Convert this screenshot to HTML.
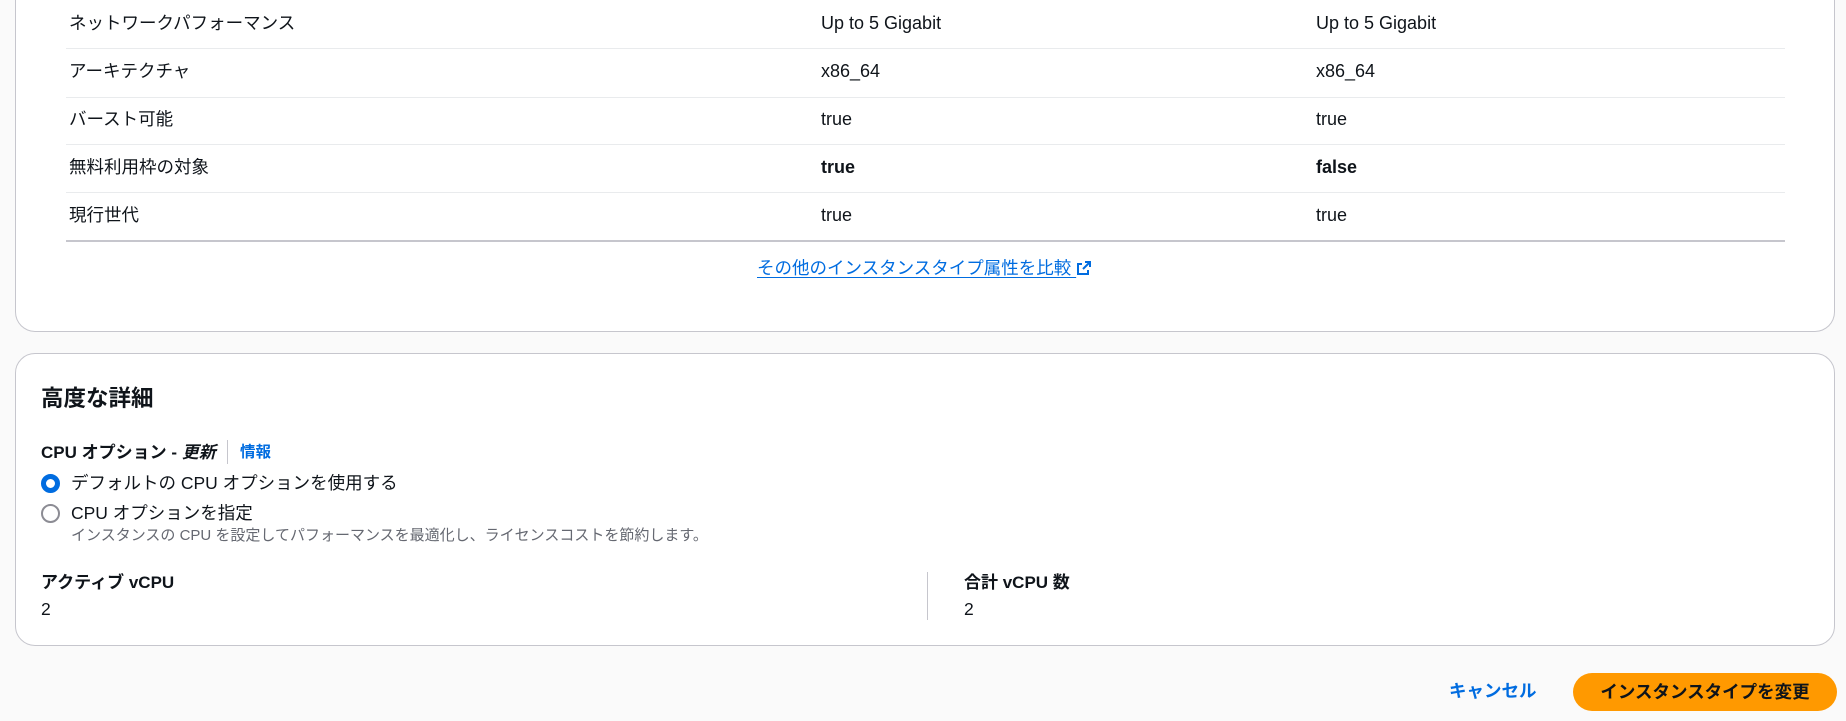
<!DOCTYPE html>
<html><head><meta charset="utf-8"><style>
*{box-sizing:border-box;margin:0;padding:0}
body{width:1846px;height:721px;overflow:hidden;background:#fafafa;font-family:"Liberation Sans","Noto Sans CJK JP",sans-serif;color:#0f141a;font-size:17.5px;position:relative}
.card{position:absolute;left:15px;right:11px;background:#fff;border:1px solid #c6c6cd;border-radius:20px}
.a{position:absolute;white-space:nowrap;line-height:24px}
.v{font-size:18px}
.line{position:absolute;left:66px;width:1719px;height:1px;background:#e9ebed}
.blue{color:#006ce0}
</style></head><body>
<div class="card" style="top:-40px;height:372px;border-top:none"></div>
<div class="a" style="left:69px;top:11px">ネットワークパフォーマンス</div>
<div class="a v" style="left:821px;top:11px">Up to 5 Gigabit</div>
<div class="a v" style="left:1316px;top:11px">Up to 5 Gigabit</div>
<div class="line" style="top:48px"></div>
<div class="a" style="left:69px;top:59px">アーキテクチャ</div>
<div class="a v" style="left:821px;top:59px">x86_64</div>
<div class="a v" style="left:1316px;top:59px">x86_64</div>
<div class="line" style="top:97px"></div>
<div class="a" style="left:69px;top:107px">バースト可能</div>
<div class="a v" style="left:821px;top:107px">true</div>
<div class="a v" style="left:1316px;top:107px">true</div>
<div class="line" style="top:144px"></div>
<div class="a" style="left:69px;top:155px">無料利用枠の対象</div>
<div class="a v" style="left:821px;top:155px;font-weight:bold">true</div>
<div class="a v" style="left:1316px;top:155px;font-weight:bold">false</div>
<div class="line" style="top:192px"></div>
<div class="a" style="left:69px;top:203px">現行世代</div>
<div class="a v" style="left:821px;top:203px">true</div>
<div class="a v" style="left:1316px;top:203px">true</div>
<div class="line" style="top:240px;height:2px;background:#c6c6cd"></div>
<div class="a blue" style="left:757px;top:256px;text-decoration:underline;text-underline-offset:3px">その他のインスタンスタイプ属性を比較 <svg width="16" height="16" viewBox="0 0 16 16" style="vertical-align:-2px"><path d="M9 2h5v5M14 2L7 9M12 10v4H2V4h4" fill="none" stroke="#006ce0" stroke-width="2"/></svg></div>

<div class="card" style="top:353px;height:293px"></div>
<div class="a" style="left:41px;top:385px;font-size:22.5px;font-weight:bold;line-height:28px">高度な詳細</div>
<div class="a" style="left:41px;top:441px;font-weight:bold;font-size:17px">CPU オプション - <i>更新</i></div>
<div class="a" style="left:227px;top:440px;width:1px;height:24px;background:#c6c6cd"></div>
<div class="a blue" style="left:240px;top:441px;font-size:15.5px;font-weight:bold">情報</div>
<div class="a" style="left:41px;top:474px;width:19px;height:19px;border-radius:50%;border:5.5px solid #006ce0"></div>
<div class="a" style="left:71px;top:471px">デフォルトの CPU オプションを使用する</div>
<div class="a" style="left:41px;top:504px;width:19px;height:19px;border-radius:50%;border:2px solid #8c8c94"></div>
<div class="a" style="left:71px;top:501px">CPU オプションを指定</div>
<div class="a" style="left:71px;top:524px;font-size:15px;color:#656871">インスタンスの CPU を設定してパフォーマンスを最適化し、ライセンスコストを節約します。</div>
<div class="a" style="left:41px;top:571px;font-weight:bold;font-size:17px">アクティブ vCPU</div>
<div class="a" style="left:41px;top:597px">2</div>
<div class="a" style="left:927px;top:572px;width:1px;height:48px;background:#c6c6cd"></div>
<div class="a" style="left:964px;top:571px;font-weight:bold;font-size:17px">合計 vCPU 数</div>
<div class="a" style="left:964px;top:597px">2</div>

<div class="a blue" style="left:1449px;top:679px;font-weight:bold">キャンセル</div>
<div class="a" style="left:1573px;top:673px;width:264px;height:38px;border-radius:19px;background:#ff9900;font-weight:bold;text-align:center;line-height:38px">インスタンスタイプを変更</div>
</body></html>
